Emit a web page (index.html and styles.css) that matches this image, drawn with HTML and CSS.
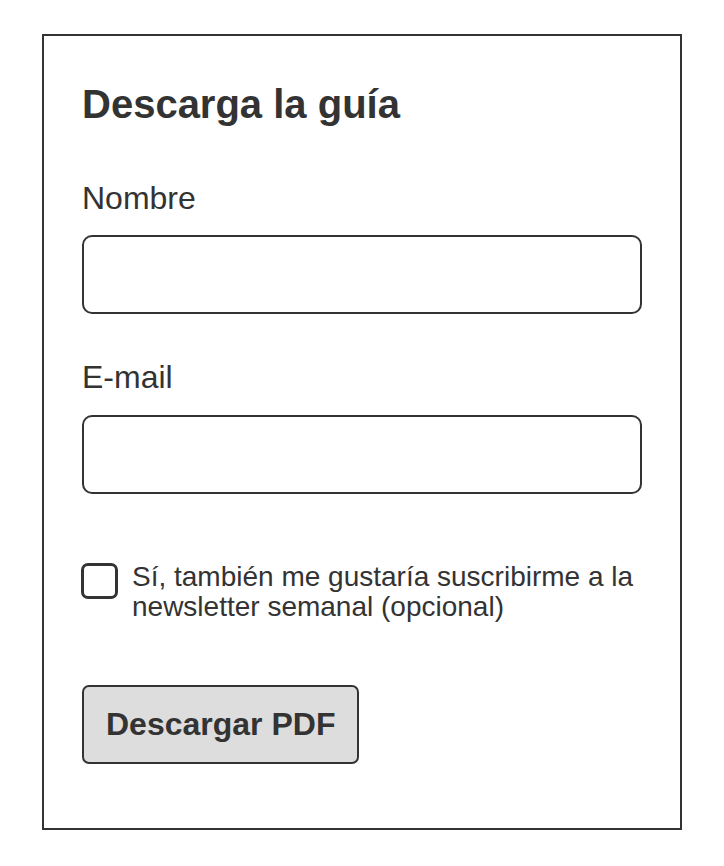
FILE: index.html
```html
<!DOCTYPE html>
<html lang="es">
<head>
<meta charset="utf-8">
<title>Descarga la guía</title>
<link rel="stylesheet" href="styles.css">
</head>
<body>
<form class="card">
  <h2 class="title">Descarga la guía</h2>
  <label class="label label-first" for="nombre">Nombre</label>
  <input class="field" id="nombre" type="text">
  <label class="label label-next" for="email">E-mail</label>
  <input class="field" id="email" type="email">
  <label class="check">
    <input class="box" type="checkbox">
    <span class="check-text">Sí, también me gustaría suscribirme a la newsletter semanal (opcional)</span>
  </label>
  <button class="btn" type="button">Descargar PDF</button>
</form>
</body>
</html>
```
FILE: styles.css
```css
html, body {
  margin: 0;
  padding: 0;
  background: #fff;
}
body {
  padding: 34px 42px;
  font-family: "Liberation Sans", Arial, Helvetica, sans-serif;
  color: #333;
}
.card {
  box-sizing: border-box;
  width: 640px;
  height: 796px;
  border: 2px solid #333;
  padding: 45px 38px 0 38px;
  display: flex;
  flex-direction: column;
  align-items: flex-start;
}
.title {
  margin: 0;
  font-size: 40px;
  line-height: 46px;
  font-weight: bold;
  color: #333;
}
.label {
  display: block;
  font-size: 32px;
  line-height: 37px;
  margin-bottom: 18px;
}
.label-first { margin-top: 53px; }
.label-next { margin-top: 45px; margin-bottom: 19px; }
.field {
  box-sizing: border-box;
  width: 560px;
  height: 79px;
  margin: 0;
  border: 2px solid #333;
  border-radius: 10px;
  background: #fff;
  font: inherit;
  font-size: 28px;
  padding: 0 16px;
  outline: none;
}
.check {
  display: flex;
  align-items: flex-start;
  gap: 14px;
  margin-top: 68px;
  font-size: 28px;
  line-height: 30px;
}
.box {
  appearance: none;
  -webkit-appearance: none;
  box-sizing: border-box;
  flex: none;
  width: 37px;
  height: 36px;
  margin: 1px 0 0 -1px;
  border: 3px solid #333;
  border-radius: 7px;
  background: #fff;
}
.check-text {
  width: 510px;
}
.btn {
  box-sizing: border-box;
  margin-top: 63px;
  height: 79px;
  padding: 0 22px;
  border: 2px solid #333;
  border-radius: 7px;
  background: #ddd;
  color: #333;
  font-family: inherit;
  font-size: 32px;
  font-weight: bold;
  line-height: 37px;
}
```
